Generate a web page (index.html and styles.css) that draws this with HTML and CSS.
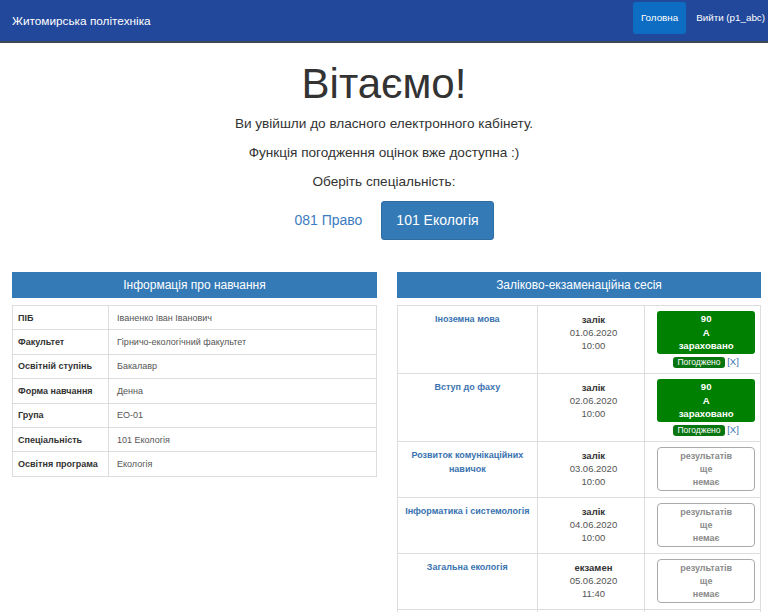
FILE: index.html
```html
<!DOCTYPE html>
<html lang="uk">
<head>
<meta charset="utf-8">
<title>Житомирська політехніка</title>
<link rel="stylesheet" href="styles.css">
</head>
<body>
<nav class="navbar">
  <a class="brand" href="#">Житомирська політехніка</a>
  <ul class="nav-links">
    <li><a class="nav-link active" href="#">Головна</a></li>
    <li><a class="nav-link logout" href="#">Вийти (p1_abc)</a></li>
  </ul>
</nav>

<section class="hero">
  <h1 class="hero-title">Вітаємо!</h1>
  <p class="hero-text">Ви увійшли до власного електронного кабінету.</p>
  <p class="hero-text">Функція погодження оцінок вже доступна :)</p>
  <p class="hero-text">Оберіть спеціальність:</p>
  <div class="spec-buttons">
    <a class="btn btn-link" href="#">081 Право</a>
    <a class="btn btn-primary" href="#">101 Екологія</a>
  </div>
</section>

<main class="panels">
  <section class="panel">
    <h2 class="panel-title">Інформація про навчання</h2>
    <table class="info-table">
      <tr><th>ПІБ</th><td>Іваненко Іван Іванович</td></tr>
      <tr><th>Факультет</th><td>Гірничо-екологічний факультет</td></tr>
      <tr><th>Освітній ступінь</th><td>Бакалавр</td></tr>
      <tr><th>Форма навчання</th><td>Денна</td></tr>
      <tr><th>Група</th><td>ЕО-01</td></tr>
      <tr><th>Спеціальність</th><td>101 Екологія</td></tr>
      <tr><th>Освітня програма</th><td>Екологія</td></tr>
    </table>
  </section>

  <section class="panel">
    <h2 class="panel-title">Заліково-екзаменаційна сесія</h2>
    <table class="session-table">
      <tr class="row-tall">
        <td class="subject"><a href="#">Іноземна мова</a></td>
        <td class="when"><b>залік</b><br>01.06.2020<br>10:00</td>
        <td class="result">
          <div class="grade">90<br>A<br>зараховано</div>
          <div class="agree"><span class="badge">Погоджено</span> <a class="cancel" href="#">[X]</a></div>
        </td>
      </tr>
      <tr class="row-tall">
        <td class="subject"><a href="#">Вступ до фаху</a></td>
        <td class="when"><b>залік</b><br>02.06.2020<br>10:00</td>
        <td class="result">
          <div class="grade">90<br>A<br>зараховано</div>
          <div class="agree"><span class="badge">Погоджено</span> <a class="cancel" href="#">[X]</a></div>
        </td>
      </tr>
      <tr>
        <td class="subject"><a href="#">Розвиток комунікаційних навичок</a></td>
        <td class="when"><b>залік</b><br>03.06.2020<br>10:00</td>
        <td class="result"><div class="pending">результатів<br>ще<br>немає</div></td>
      </tr>
      <tr>
        <td class="subject"><a href="#">Інформатика і системологія</a></td>
        <td class="when"><b>залік</b><br>04.06.2020<br>10:00</td>
        <td class="result"><div class="pending">результатів<br>ще<br>немає</div></td>
      </tr>
      <tr>
        <td class="subject"><a href="#">Загальна екологія</a></td>
        <td class="when"><b>екзамен</b><br>05.06.2020<br>11:40</td>
        <td class="result"><div class="pending">результатів<br>ще<br>немає</div></td>
      </tr>
      <tr>
        <td class="subject"><a href="#">Фізична культура</a></td>
        <td class="when"><b>залік</b><br>06.06.2020<br>10:00</td>
        <td class="result"><div class="pending">результатів<br>ще<br>немає</div></td>
      </tr>
    </table>
  </section>
</main>
</body>
</html>
```

FILE: styles.css
```css
* { box-sizing: border-box; }

html, body {
  margin: 0;
  padding: 0;
  background: #fff;
  font-family: "Liberation Sans", Arial, sans-serif;
  color: #333;
  overflow: hidden;
}

a { text-decoration: none; }

.navbar {
  height: 43px;
  background: #22489b;
  border-bottom: 2px solid #3e4554;
  display: flex;
  align-items: center;
  justify-content: space-between;
  padding: 0 0 0 12px;
}

.brand {
  color: #fff;
  font-size: 11.8px;
}

.nav-links {
  list-style: none;
  margin: 0;
  padding: 0 0 5px;
  display: flex;
  align-items: center;
  height: 100%;
}

.nav-link {
  display: block;
  color: #fff;
  font-size: 9.8px;
  height: 32px;
  line-height: 32px;
  border-radius: 3px;
}

.nav-link.active {
  background: #0c6dc2;
  padding: 0 8px;
}

.nav-link.logout {
  padding: 0 3px 0 10px;
}

.hero {
  text-align: center;
  padding-top: 15px;
}

.hero-title {
  margin: 0 0 6px;
  font-size: 42px;
  font-weight: 400;
  line-height: 52px;
  color: #333;
}

.hero-text {
  margin: 0 0 13px;
  font-size: 13.6px;
  line-height: 16px;
}

.spec-buttons {
  display: flex;
  justify-content: center;
  align-items: center;
  gap: 3px;
  margin-top: -2px;
  padding-left: 4px;
}

.btn {
  display: inline-block;
  font-size: 14px;
  padding: 0 16px;
  height: 39px;
  line-height: 39px;
  border-radius: 3px;
}

.btn-link { color: #3b7bbf; }

.btn-primary {
  background: #337ab7;
  color: #fff;
  border: 1px solid #2e6da4;
  line-height: 37px;
  padding: 0 14px;
}

.panels {
  display: grid;
  grid-template-columns: 365px 364px;
  gap: 20px;
  padding: 0 0 0 12px;
  margin-top: 32px;
  align-items: start;
}

.panel-title {
  margin: 0 0 7px;
  height: 26px;
  line-height: 26px;
  background: #337ab7;
  color: #fff;
  font-size: 12px;
  font-weight: 400;
  text-align: center;
}

table {
  width: 100%;
  border-collapse: collapse;
  border: 1px solid #ddd;
}

.info-table th,
.info-table td {
  border: 1px solid #ddd;
  height: 24.4px;
  font-size: 9px;
  text-align: left;
  vertical-align: middle;
  white-space: nowrap;
}

.info-table th {
  width: 96px;
  padding: 0 5px;
  font-weight: 700;
  color: #333;
}

.info-table td {
  padding: 0 8px;
  color: #555;
}

.session-table td {
  border: 1px solid #ddd;
  vertical-align: top;
  text-align: center;
  font-size: 9.5px;
  line-height: 13px;
  height: 56px;
  padding: 7px 3px 0;
}

.session-table .row-tall td { height: 68px; }

.session-table .subject { width: 140px; font-weight: 700; font-size: 9px; line-height: 14px; padding-top: 6px; }
.session-table .subject a { color: #3a73b0; }

.session-table .when { width: 108px; color: #555; padding-left: 8px; }
.session-table .when b { color: #333; }

.session-table .result {
  width: 116px;
  padding: 5px 5px 0 12px;
}

.grade {
  background: #008000;
  color: #fff;
  font-weight: 700;
  font-size: 9.6px;
  border-radius: 3px;
  height: 43px;
  padding-top: 1px;
  line-height: 13.5px;
}

.agree {
  margin-top: 2px;
  line-height: 12px;
}

.badge {
  display: inline-block;
  background: #087510;
  color: #fff;
  font-size: 8.5px;
  line-height: 11px;
  padding: 0 4px;
  border-radius: 3px;
}

.cancel {
  color: #3a73b0;
  font-size: 9.5px;
}

.pending {
  border: 1px solid #aaa;
  border-radius: 4px;
  height: 44px;
  padding-top: 2px;
  color: #8a8a8a;
  font-weight: 700;
  font-size: 9px;
  line-height: 13px;
}
```
